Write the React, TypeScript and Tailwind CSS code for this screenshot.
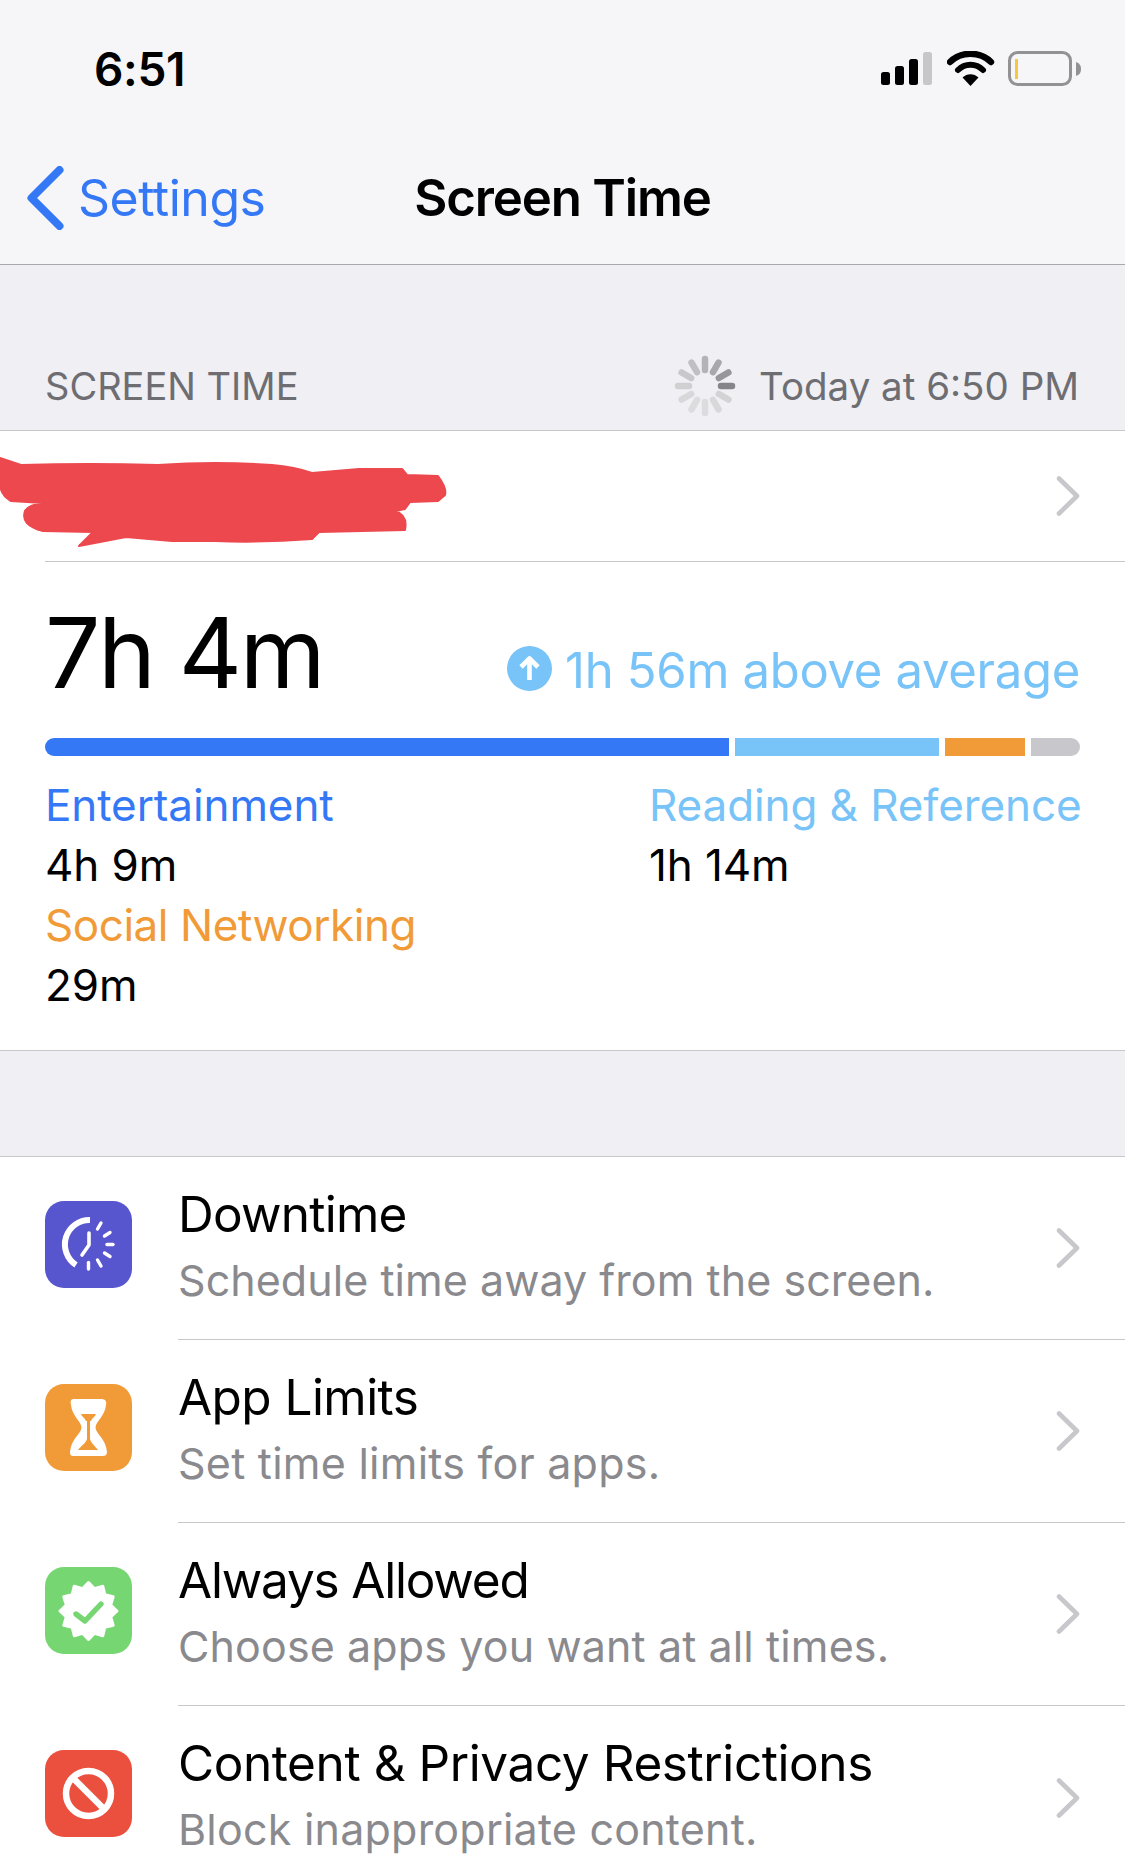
import React from 'react';

const FONT = 'font-["Inter","Liberation_Sans",sans-serif]';

const Chevron = () => (
  <svg width="24" height="40" viewBox="0 0 24 40" className="shrink-0">
    <path d="M3 2.5 L21 20 L3 37.5" fill="none" stroke="#c7c7cc" strokeWidth="4.6" strokeLinejoin="round" strokeLinecap="round" />
  </svg>
);

const Spinner = () => (
  <svg width="64" height="64" viewBox="-32 -32 64 64" className="shrink-0">
    {[0, 1, 2, 3, 4, 5, 6, 7, 8, 9, 10, 11].map((i) => {
      // darkest spoke points to the right, fades going clockwise
      const shades = ['#85858a', '#d3d3d6', '#d8d8da', '#dcdcde', '#dcdcde', '#d8d8da', '#d0d0d3', '#c8c8cb', '#c0c0c3', '#b4b4b8', '#a8a8ac', '#97979b'];
      return (
        <line key={i} x1="16" y1="0" x2="27" y2="0" stroke={shades[i]} strokeWidth="6.5" strokeLinecap="round" transform={`rotate(${i * 30})`} />
      );
    })}
  </svg>
);

const StatusIcons = () => (
  <div className="flex items-center">
    <svg width="52" height="34" viewBox="0 0 52 34">
      <rect x="0" y="20" width="9" height="13" rx="2.5" fill="#000" />
      <rect x="14" y="14" width="9" height="19" rx="2.5" fill="#000" />
      <rect x="28" y="7" width="9" height="26" rx="2.5" fill="#000" />
      <rect x="42" y="0" width="9" height="33" rx="2.5" fill="#c7c7c9" />
    </svg>
    <svg width="48" height="36" viewBox="0 0 48 36" className="ml-[14px]">
      <path d="M3 11 C14 0 33 0 44 11" fill="none" stroke="#000" strokeWidth="6.4" strokeLinecap="round" />
      <path d="M11 19 C18 12 29 12 36 19" fill="none" stroke="#000" strokeWidth="6" strokeLinecap="round" />
      <path d="M15.5 26.5 L23.5 35 L31.5 26.5 C27 22 20 22 15.5 26.5 Z" fill="#000" />
    </svg>
    <svg width="74" height="36" viewBox="0 0 74 36" className="ml-[13px]">
      <rect x="1.5" y="1.5" width="61" height="32" rx="8" fill="none" stroke="#929295" strokeWidth="3" />
      <rect x="7" y="8" width="3" height="20" fill="#f5c93f" />
      <path d="M68 11 C71 12 73 14 73 18 C73 22 71 24 68 25 Z" fill="#929295" />
    </svg>
  </div>
);

const DowntimeIcon = () => (
  <svg viewBox="0 0 87 87" className="w-full h-full">
    <path d="M45 19 A 24.5 24.5 0 0 0 31 64" fill="none" stroke="#fff" strokeWidth="6" />
    <path d="M44 32 L44 44 L37 54" fill="none" stroke="#fff" strokeWidth="3.6" strokeLinecap="round" strokeLinejoin="round" />
    <g stroke="#fff" strokeWidth="3.4" strokeLinecap="round">
      <path d="M52.5 28 L56 22" />
      <path d="M59.5 35 L65 31.5" />
      <path d="M62 43.5 L68 43.5" />
      <path d="M59.5 52 L65 55.5" />
      <path d="M52.5 59 L56 65" />
      <path d="M43.5 61.5 L43.5 68" />
    </g>
  </svg>
);

const HourglassIcon = () => (
  <svg viewBox="0 0 87 87" className="w-full h-full">
    <path d="M29 15 H56 C60 15 62 17 61 21 C60 32 51 37 50.5 43.5 C51 50 61 55 62 68 C62 71 60 72 58 72 H28 C26 72 25 71 25 68 C26 55 36 50 36.5 43.5 C36 37 27 32 26 21 C25 17 26 15 29 15 Z" fill="#fff" />
    <path d="M36 30 H51 C50 33 47 34 46 37 H45 V55 C46 59 50 62 53 66 H33 C36 62 41 59 42 55 V37 H41 C40 34 37 33 36 30 Z" fill="#f19b38" />
  </svg>
);

const BadgeIcon = () => {
  // twelve point scalloped seal
  const pts: string[] = [];
  for (let i = 0; i < 24; i++) {
    const a = (i * 15 - 90) * (Math.PI / 180);
    const r = i % 2 === 0 ? 28.5 : 23;
    pts.push(`${(43.5 + r * Math.cos(a)).toFixed(1)},${(44 + r * Math.sin(a)).toFixed(1)}`);
  }
  return (
    <svg viewBox="0 0 87 87" className="w-full h-full">
      <polygon points={pts.join(' ')} fill="#fff" stroke="#fff" strokeWidth="3" strokeLinejoin="round" />
      <path d="M31 47 L40 54 L56 37" fill="none" stroke="#76d672" strokeWidth="5.4" strokeLinecap="round" strokeLinejoin="round" />
    </svg>
  );
};

const BlockIcon = () => (
  <svg viewBox="0 0 87 87" className="w-full h-full">
    <circle cx="43.5" cy="43.5" r="22.5" fill="none" stroke="#fff" strokeWidth="6.5" />
    <path d="M28 28 L59 59" stroke="#fff" strokeWidth="6.5" />
  </svg>
);

const rows = [
  { title: 'Downtime', titleCls: 'tracking-[-0.75px]', sub: 'Schedule time away from the screen.', subCls: 'tracking-[0.05px]', bg: 'bg-[#5856ce]', icon: <DowntimeIcon /> },
  { title: 'App Limits', titleCls: 'tracking-[-0.55px]', sub: 'Set time limits for apps.', subCls: 'tracking-[0.25px]', bg: 'bg-[#f19b38]', icon: <HourglassIcon /> },
  { title: 'Always Allowed', titleCls: 'tracking-[-1.2px]', sub: 'Choose apps you want at all times.', subCls: 'tracking-[0.12px]', bg: 'bg-[#76d672]', icon: <BadgeIcon /> },
  { title: 'Content & Privacy Restrictions', titleCls: 'tracking-[-0.42px]', sub: 'Block inappropriate content.', subCls: 'tracking-[0.22px]', bg: 'bg-[#eb4f3d]', icon: <BlockIcon /> },
];

export default function App() {
  return (
    <div className={`w-[1125px] h-[1872px] overflow-hidden bg-white text-black ${FONT}`}>
      {/* status + nav */}
      <div className="bg-[#f6f6f8] border-b border-[#a9a9ac]">
        <div className="h-[138px] flex items-center justify-between pl-[94px] pr-[43px]">
          <span className="text-[46px] font-semibold leading-none tracking-[-0.3px]">6:51</span>
          <StatusIcons />
        </div>
        <div className="h-[126px] pb-[7px] grid grid-cols-[1fr_auto_1fr] items-center">
          <div className="flex items-center pl-[27px] gap-[14px] text-[#3478f6]">
            <svg width="37" height="64" viewBox="0 0 37 64">
              <path d="M32.5 4 L4.5 32 L32.5 60" fill="none" stroke="#3478f6" strokeWidth="8" strokeLinecap="round" strokeLinejoin="round" />
            </svg>
            <span className="text-[50px] leading-none tracking-[-0.5px]">Settings</span>
          </div>
          <span className="text-[51px] font-semibold leading-none tracking-[-1.2px]">Screen Time</span>
          <div />
        </div>
      </div>

      {/* section header */}
      <div className="h-[166px] bg-[#efeff4] border-b border-[#c8c8cc] flex items-end justify-between pl-[45px] pr-[46px] pb-[12px] text-[#6d6d72] text-[38px] leading-none">
        <span className="pb-[13px]">SCREEN TIME</span>
        <div className="flex items-center gap-[22px]">
          <Spinner />
          <span className="text-[38.5px]">Today at 6:50 PM</span>
        </div>
      </div>

      {/* profile row, name is scribbled over */}
      <div className="relative h-[131px] pl-[45px]">
        <div className="h-full flex items-center justify-end pr-[45px] border-b border-[#c8c8cc]">
          <Chevron />
        </div>
        <svg width="450" height="120" viewBox="0 0 450 120" className="absolute left-0 top-[2px]">
          <path d="M380 70 L392 66 L389 82 Z" fill="#000" />
          <path
            d="M0 25 L21 32 Q90 30 158 32 Q215 28 272 32 Q295 34 312 40 L359 36 L402 36 L407 42 L438 43 Q447 55 445 62 L438 68 L410 69 L405 76 L395 78 Q408 82 405 97 L319 99 L312 106 Q260 110 215 108 L172 108 L126 104 L79 113 L93 99 L43 98 Q20 92 25 78 Q28 72 43 70 L11 68 Q0 62 0 50 Z"
            fill="#ec484e"
            stroke="#ec484e"
            strokeWidth="2"
            strokeLinejoin="round"
          />
        </svg>
      </div>

      {/* usage summary */}
      <div className="h-[489px] px-[45px] border-b border-[#c8c8cc] bg-white">
        <div className="h-[127px] flex items-baseline justify-between pt-[43px]">
          <span className="text-[98px] leading-[96px] tracking-[-2.4px]">7h 4m</span>
          <div className="flex items-baseline text-[#78c3f7] text-[49px] leading-none tracking-[-0.3px]">
            <svg width="45" height="45" viewBox="0 0 45 45" className="self-center mr-[13px] translate-y-[-2px]">
              <circle cx="22.5" cy="22.5" r="22.5" fill="#78c3f7" />
              <path d="M22.5 34 V13 M14 21 L22.5 12.5 L31 21" fill="none" stroke="#fff" strokeWidth="4.6" strokeLinejoin="round" />
            </svg>
            <span>1h 56m above average</span>
          </div>
        </div>
        <div className="mt-[49px] h-[18px] flex gap-[6px] rounded-full overflow-hidden">
          <div className="w-[684px] bg-[#3478f6]" />
          <div className="w-[204px] bg-[#78c3f7]" />
          <div className="w-[80px] bg-[#f19b38]" />
          <div className="flex-1 bg-[#c7c7cc]" />
        </div>
        <div className="mt-[19px] grid grid-cols-[604px_1fr] text-[44px] leading-[60px] tracking-[-0.1px]">
          <div>
            <div className="text-[#3478f6]">Entertainment</div>
            <div>4h 9m</div>
            <div className="text-[#f19b38] tracking-[-0.45px]">Social Networking</div>
            <div>29m</div>
          </div>
          <div>
            <div className="text-[#78c3f7] whitespace-nowrap">Reading &amp; Reference</div>
            <div>1h 14m</div>
          </div>
        </div>
      </div>

      <div className="h-[106px] bg-[#efeff4] border-b border-[#c8c8cc]" />

      {/* settings list */}
      {rows.map((r, i) => (
        <div key={r.title} className="h-[183px] flex items-start pl-[45px]">
          <div className={`mt-[44px] w-[87px] h-[87px] rounded-[19px] shrink-0 ${r.bg}`}>{r.icon}</div>
          <div className={`ml-[46px] flex-1 h-full flex items-center justify-between pr-[45px] ${i < rows.length - 1 ? 'border-b border-[#c8c8cc]' : ''}`}>
            <div className="pb-[6px]">
              <div className={`text-[49.5px] leading-[60px] ${r.titleCls}`}>{r.title}</div>
              <div className={`mt-[9px] text-[43px] leading-[54px] text-[#8a8a8e] ${r.subCls}`}>{r.sub}</div>
            </div>
            <Chevron />
          </div>
        </div>
      ))}
    </div>
  );
}
